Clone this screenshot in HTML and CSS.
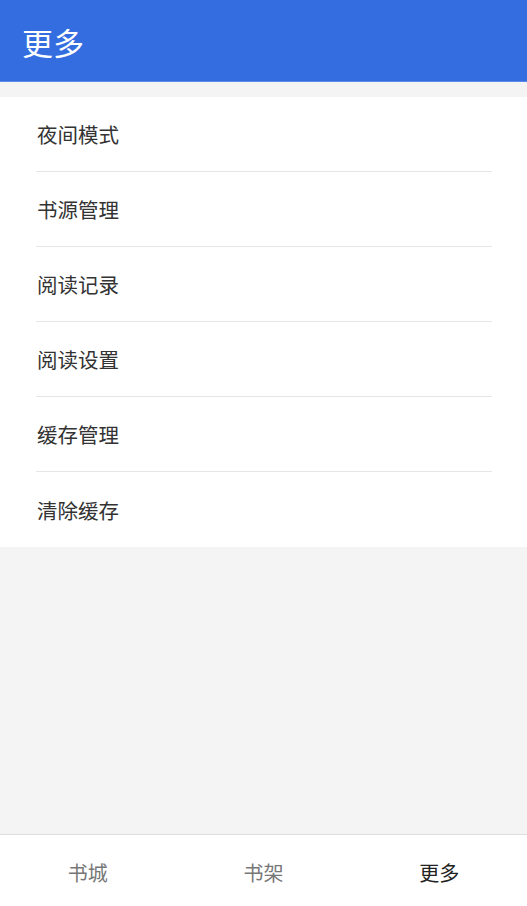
FILE: index.html
```html
<!DOCTYPE html>
<html lang="zh-CN">
<head>
<meta charset="utf-8">
<link rel="stylesheet" href="styles.css">
</head>
<body>
<div class="app">
  <header class="topbar"><h1 class="title">更多</h1></header>
  <main class="content">
    <ul class="menu">
      <li class="item">夜间模式</li>
      <li class="item">书源管理</li>
      <li class="item">阅读记录</li>
      <li class="item">阅读设置</li>
      <li class="item">缓存管理</li>
      <li class="item">清除缓存</li>
    </ul>
  </main>
  <nav class="tabbar">
    <div class="tab">书城</div>
    <div class="tab">书架</div>
    <div class="tab active">更多</div>
  </nav>
</div>
</body>
</html>
```

FILE: styles.css
```css
* { box-sizing: border-box; }
html, body { margin: 0; padding: 0; height: 100%; }
body {
  font-family: "Noto Sans CJK SC", "Noto Sans", sans-serif;
  background: #f4f4f4;
}
.app {
  display: flex;
  flex-direction: column;
  height: 906px;
}
.topbar {
  height: 82px;
  background: #336ddf;
  display: flex;
  align-items: center;
  padding-left: 22px;
  border-bottom: 1px solid #5a8ae6;
}
.title {
  margin: 0;
  color: #fff;
  font-size: 31px;
  font-weight: 400;
  line-height: 1;
  padding-top: 2px;
}
.content {
  flex: 1;
  padding-top: 15px;
}
.menu {
  list-style: none;
  margin: 0;
  padding: 0 35px 0 36px;
  background: #fff;
}
.item {
  height: 75px;
  display: flex;
  align-items: center;
  padding-left: 1px;
  font-size: 20.5px;
  color: #333;
  border-bottom: 1px solid #e6e6e6;
}
.item:last-child { border-bottom: none; }
.tabbar {
  height: 72px;
  background: #fff;
  border-top: 1px solid #dedede;
  display: grid;
  grid-template-columns: 1fr 1fr 1fr;
}
.tab {
  display: flex;
  align-items: center;
  justify-content: center;
  font-size: 20px;
  color: #777;
  padding-top: 4px;
}
.tab.active { color: #222; }
```
